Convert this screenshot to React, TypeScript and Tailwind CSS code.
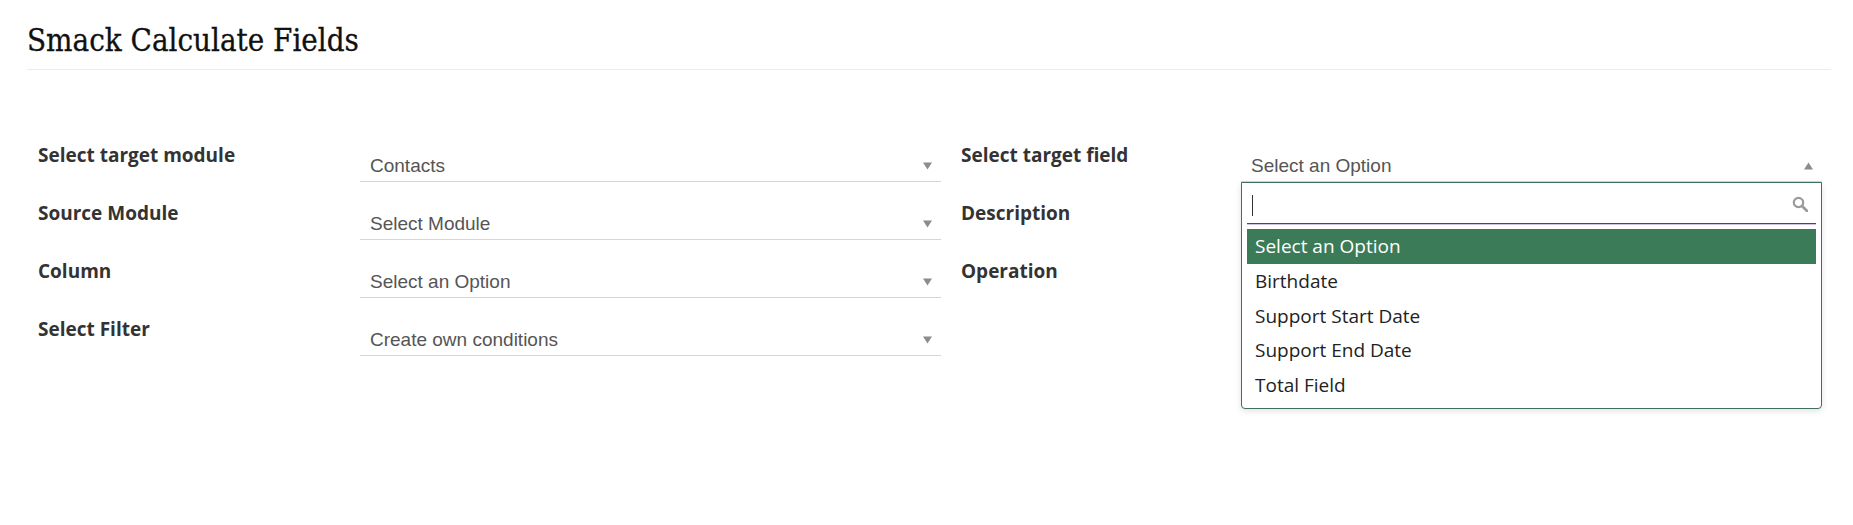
const LEFT_ROWS = [
  { label: "Select target module", value: "Contacts" },
  { label: "Source Module", value: "Select Module" },
  { label: "Column", value: "Select an Option" },
  { label: "Select Filter", value: "Create own conditions" },
];

const OPTIONS = ["Birthdate", "Support Start Date", "Support End Date", "Total Field"];

function Arrow({ up = false }: { up?: boolean }) {
  return (
    <svg width="9" height="8" viewBox="0 0 9 8" className="shrink-0">
      <path d={up ? "M4.5 0.5 L9 7.5 L0 7.5 Z" : "M0 0.5 L9 0.5 L4.5 7.5 Z"} fill="#8c8c8c" />
    </svg>
  );
}

function SelectBox({ value, up = false }: { value: string; up?: boolean }) {
  return (
    <div className="flex h-[38px] w-[581px] items-center justify-between border-b border-[#d6d6d6] pl-[10px] pr-[9px] pt-[7px] font-['Liberation_Sans',sans-serif] text-[19px] text-[#555]">
      <span>{value}</span>
      <Arrow up={up} />
    </div>
  );
}

function Dropdown() {
  return (
    <div className="absolute left-0 top-full z-10 h-[227px] w-[581px] rounded-b-[4px] border border-[#3f6f5d] bg-white px-[5px] pt-[4px] font-['Open_Sans',sans-serif] text-[19px] text-[#222] shadow-[0_2px_6px_rgba(0,0,0,0.12)]">
      <div className="flex h-[37px] items-center border-b border-[#3f4a68] shadow-[0_1px_0_#cfc4e6]">
        <div className="ml-[5px] h-[21px] w-px bg-[#333]" />
        <svg width="16" height="16" viewBox="0 0 16 16" className="mb-[3px] ml-auto mr-[8px]" fill="none" stroke="#9a9a9a">
          <circle cx="6.5" cy="6.5" r="4.7" strokeWidth="2.2" />
          <path d="M10 10 L15 15" strokeWidth="2.8" strokeLinecap="round" />
        </svg>
      </div>
      <div className="mt-[5px] flex h-[35px] items-center bg-[#3c7b58] px-[8px] text-white">Select an Option</div>
      {OPTIONS.map((o) => (
        <div key={o} className="flex h-[34.7px] items-center px-[8px]">
          {o}
        </div>
      ))}
    </div>
  );
}

export default function App() {
  return (
    <div className="h-[525px] bg-white pl-[27px] pr-[22px]">
      <div className="flex h-[70px] items-center border-b border-[#ececec] pt-[11px]">
        <h1 className="font-['DejaVu_Serif_Condensed','DejaVu_Serif',serif] text-[31px] font-normal text-[#111] [-webkit-text-stroke:0.3px_#111]">
          Smack Calculate Fields
        </h1>
      </div>

      <div className="mt-[72px] grid grid-cols-[923px_862px] pl-[11px] font-['Open_Sans',sans-serif]">
        <div>
          {LEFT_ROWS.map((r) => (
            <div key={r.label} className="flex h-[58px]">
              <label className="h-[26px] w-[322px] text-[19px] font-bold leading-[26px] text-[#333]">{r.label}</label>
              <div className="mt-[2px]">
                <SelectBox value={r.value} />
              </div>
            </div>
          ))}
        </div>
        <div>
          <div className="flex h-[58px]">
            <label className="h-[26px] w-[280px] text-[19px] font-bold leading-[26px] text-[#333]">Select target field</label>
            <div className="relative mt-[2px] self-start">
              <SelectBox value="Select an Option" up />
              <Dropdown />
            </div>
          </div>
          <div className="flex h-[58px]">
            <label className="h-[26px] w-[280px] text-[19px] font-bold leading-[26px] text-[#333]">Description</label>
          </div>
          <div className="flex h-[58px]">
            <label className="h-[26px] w-[280px] text-[19px] font-bold leading-[26px] text-[#333]">Operation</label>
          </div>
        </div>
      </div>
    </div>
  );
}
